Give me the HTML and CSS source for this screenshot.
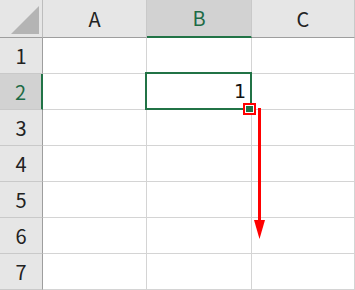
FILE: index.html
```html
<!DOCTYPE html>
<html lang="ja">
<head>
<meta charset="UTF-8" />
<title>オートフィル</title>
<link rel="stylesheet" href="styles.css">
</head>
<body>
<div class="sheet">
  <div class="grid">
    <!-- 見出し行 -->
    <div class="corner"><span class="tri"></span></div>
    <div class="colHead">A</div>
    <div class="colHead sel">B</div>
    <div class="colHead">C</div>

    <div class="rowHead">1</div><div class="cell"></div><div class="cell"></div><div class="cell"></div>
    <div class="rowHead sel">2</div><div class="cell"></div><div class="cell value">1</div><div class="cell"></div>
    <div class="rowHead">3</div><div class="cell"></div><div class="cell"></div><div class="cell"></div>
    <div class="rowHead">4</div><div class="cell"></div><div class="cell"></div><div class="cell"></div>
    <div class="rowHead">5</div><div class="cell"></div><div class="cell"></div><div class="cell"></div>
    <div class="rowHead">6</div><div class="cell"></div><div class="cell"></div><div class="cell"></div>
    <div class="rowHead">7</div><div class="cell"></div><div class="cell"></div><div class="cell"></div>
  </div>

  <!-- 選択範囲とフィルハンドル -->
  <div class="selection"></div>
  <div class="handle"><span></span></div>

  <!-- 矢印 -->
  <svg class="arrow" width="20" height="140" viewBox="0 0 20 140">
    <rect x="4" y="0" width="3" height="116" fill="#ff0000"/>
    <polygon points="0,112 11,112 5.5,131" fill="#ff0000"/>
  </svg>
</div>
</body>
</html>
```

FILE: styles.css
```css
body {
  margin: 0;
  background: #fff;
  font-family: "Noto Sans CJK JP", "Noto Sans", sans-serif;
}

.sheet {
  position: relative;
  width: 355px;
  height: 290px;
  overflow: hidden;
}

.grid {
  display: grid;
  grid-template-columns: 43px 104px 105px 103px;
  grid-template-rows: 38px repeat(7, 36px);
}

.grid > div {
  box-sizing: border-box;
  border-right: 1px solid #d4d4d4;
  border-bottom: 1px solid #d4d4d4;
}

/* 見出し */
.corner {
  background: #e6e6e6;
  position: relative;
  border-right-color: #bdbdbd !important;
  border-bottom-color: #9e9e9e !important;
}
.corner .tri {
  position: absolute;
  left: 11px;
  top: 6px;
  width: 28px;
  height: 28px;
  background: #b4b4b4;
  clip-path: polygon(100% 0, 100% 100%, 0 100%);
}

.colHead {
  background: #e6e6e6;
  color: #222;
  font-size: 20px;
  line-height: 37px;
  text-align: center;
  border-right-color: #c9c9c9 !important;
  border-bottom-color: #9e9e9e !important;
}
.colHead.sel {
  background: #d2d2d2;
  color: #1e6b46;
  border-bottom: 2px solid #217346 !important;
  line-height: 36px;
}

.rowHead {
  background: #e6e6e6;
  color: #222;
  font-size: 20px;
  line-height: 35px;
  text-align: center;
  border-right-color: #9e9e9e !important;
  border-bottom-color: #c9c9c9 !important;
}
.rowHead.sel {
  background: #d2d2d2;
  color: #1e6b46;
  border-right: 2px solid #217346 !important;
}

.cell.value {
  font-family: "DejaVu Sans", sans-serif;
  font-size: 19px;
  line-height: 34px;
  text-align: right;
  padding-right: 5px;
  color: #111;
}

.selection {
  position: absolute;
  left: 145px;
  top: 72px;
  width: 107px;
  height: 38px;
  box-sizing: border-box;
  border: 2px solid #217346;
}

.handle {
  position: absolute;
  left: 243px;
  top: 103px;
  width: 13px;
  height: 12px;
  box-sizing: border-box;
  border: 2px solid #ff0000;
  background: #fff;
  padding: 1px;
}
.handle span {
  display: block;
  width: 100%;
  height: 100%;
  background: #217346;
}

.arrow {
  position: absolute;
  left: 254px;
  top: 108px;
}
```
